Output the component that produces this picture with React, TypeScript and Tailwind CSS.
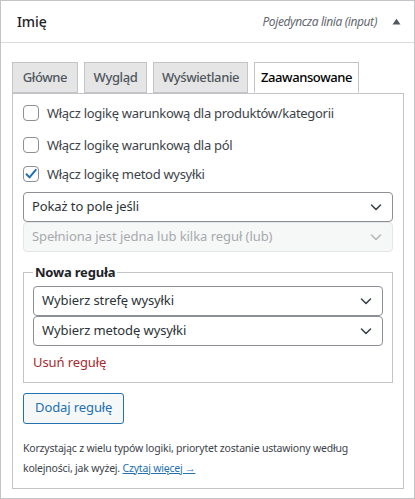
import React from "react";

const Chevron = ({ color = "#1d2327" }: { color?: string }) => (
  <svg width="16" height="16" viewBox="0 0 16 16" fill="none">
    <path d="M3.5 6l4.5 4.5L12.5 6" stroke={color} strokeWidth="1.6" strokeLinecap="round" strokeLinejoin="round" />
  </svg>
);

const Select = ({ label, disabled = false }: { label: string; disabled?: boolean }) => (
  <div
    className={
      disabled
        ? "flex h-[30px] items-center justify-between rounded-[4px] border border-[#e4e5e6] bg-[#f6f7f7] pl-[8px] pr-[8px] text-[13px] tracking-[-0.05px] text-[#a7aaad]"
        : "flex h-[30px] items-center justify-between rounded-[4px] border border-[#8c8f94] bg-white pl-[8px] pr-[8px] text-[13px] tracking-[-0.1px] text-[#2c3338]"
    }
  >
    <span>{label}</span>
    <Chevron color={disabled ? "#b5b8bb" : "#3c434a"} />
  </div>
);

const Checkbox = ({ checked = false, label }: { checked?: boolean; label: string }) => (
  <div className="flex items-center">
    <span className="flex h-[16px] w-[16px] items-center justify-center rounded-[4px] border border-[#8c8f94] bg-white">
      {checked && (
        <svg width="14" height="14" viewBox="0 0 14 14" fill="none">
          <path d="M2.5 7.2l3 3.2L11.8 2.8" stroke="#2271b1" strokeWidth="2" strokeLinecap="round" strokeLinejoin="round" />
        </svg>
      )}
    </span>
    <span className="ml-[8px] text-[13px] leading-[16px] tracking-[-0.3px] text-[#3c434a]">{label}</span>
  </div>
);

const Tab = ({ label, w, active = false }: { label: string; w: string; active?: boolean }) => (
  <div
    className={
      active
        ? `relative z-10 -mb-px flex h-[31px] ${w} items-center justify-center border border-[#c3c4c7] border-b-white bg-white text-[13px] font-medium tracking-[-0.4px] text-black`
        : `flex h-[31px] ${w} items-center justify-center border border-[#c3c4c7] bg-[#e5e5e5] text-[13px] font-medium tracking-[-0.4px] text-[#50575e]`
    }
  >
    {label}
  </div>
);

export default function App() {
  return (
    <div className="h-[499px] w-[415px] bg-white" style={{ fontFamily: '"Noto Sans", "Liberation Sans", sans-serif' }}>
      <div className="w-[415px] border border-[#c3c4c7] bg-white">
        <div className="flex h-[42px] items-center justify-between border-b border-[#dcdcde] pl-[16px] pr-[13px]">
          <span className="text-[14px] font-medium tracking-[-0.1px] text-[#1d2327]">Imię</span>
          <div className="flex items-center">
            <span className="text-[12px] italic tracking-[-0.4px] text-[#646970]">Pojedyncza linia (input)</span>
            <svg className="ml-[15px]" width="9" height="7" viewBox="0 0 9 7">
              <path d="M0.5 6.5L4.5 0.8L8.5 6.5Z" fill="#50575e" />
            </svg>
          </div>
        </div>
        <div className="pl-[11px] pr-[10px] pt-[19px] pb-[9px]">
          <div className="flex gap-[6px]">
            <Tab label="Główne" w="w-[66px]" />
            <Tab label="Wygląd" w="w-[63px]" />
            <Tab label="Wyświetlanie" w="w-[95px]" />
            <Tab label="Zaawansowane" w="w-[105px]" active />
          </div>
          <div className="border border-[#c3c4c7] px-[10px] pt-[11px] pb-[10px]">
            <Checkbox label="Włącz logikę warunkową dla produktów/kategorii" />
            <div className="mt-[16px]">
              <Checkbox label="Włącz logikę warunkową dla pól" />
            </div>
            <div className="mt-[13px]">
              <Checkbox checked label="Włącz logikę metod wysyłki" />
            </div>
            <div className="mt-[10px] flex flex-col">
              <Select label="Pokaż to pole jeśli" />
              <Select label="Spełniona jest jedna lub kilka reguł (lub)" disabled />
            </div>
            <fieldset className="mt-[11px] border border-[#c3c4c7] px-[9px] pb-[10px]">
              <legend className="px-[2px] text-[13px] font-bold tracking-[-0.2px] text-[#1d2327]">Nowa reguła</legend>
              <div className="mt-[3px] flex flex-col">
                <Select label="Wybierz strefę wysyłki" />
                <Select label="Wybierz metodę wysyłki" />
              </div>
              <div className="mt-[6px] text-[13px] leading-[20px] tracking-[-0.1px] text-[#a62a2f]">Usuń regułę</div>
            </fieldset>
            <button className="mt-[10px] flex h-[31px] items-center rounded-[3px] border border-[#2271b1] bg-[#f6f7f7] px-[11px] text-[13px] tracking-[-0.1px] text-[#2271b1]">
              Dodaj regułę
            </button>
            <p className="mt-[14px] whitespace-nowrap text-[10.5px] leading-[20px] tracking-[-0.2px] text-[#3c434a]">
              Korzystając z wielu typów logiki, priorytet zostanie ustawiony według
              <br />
              kolejności, jak wyżej. <a className="text-[#2271b1] underline">Czytaj więcej →</a>
            </p>
          </div>
        </div>
      </div>
    </div>
  );
}
